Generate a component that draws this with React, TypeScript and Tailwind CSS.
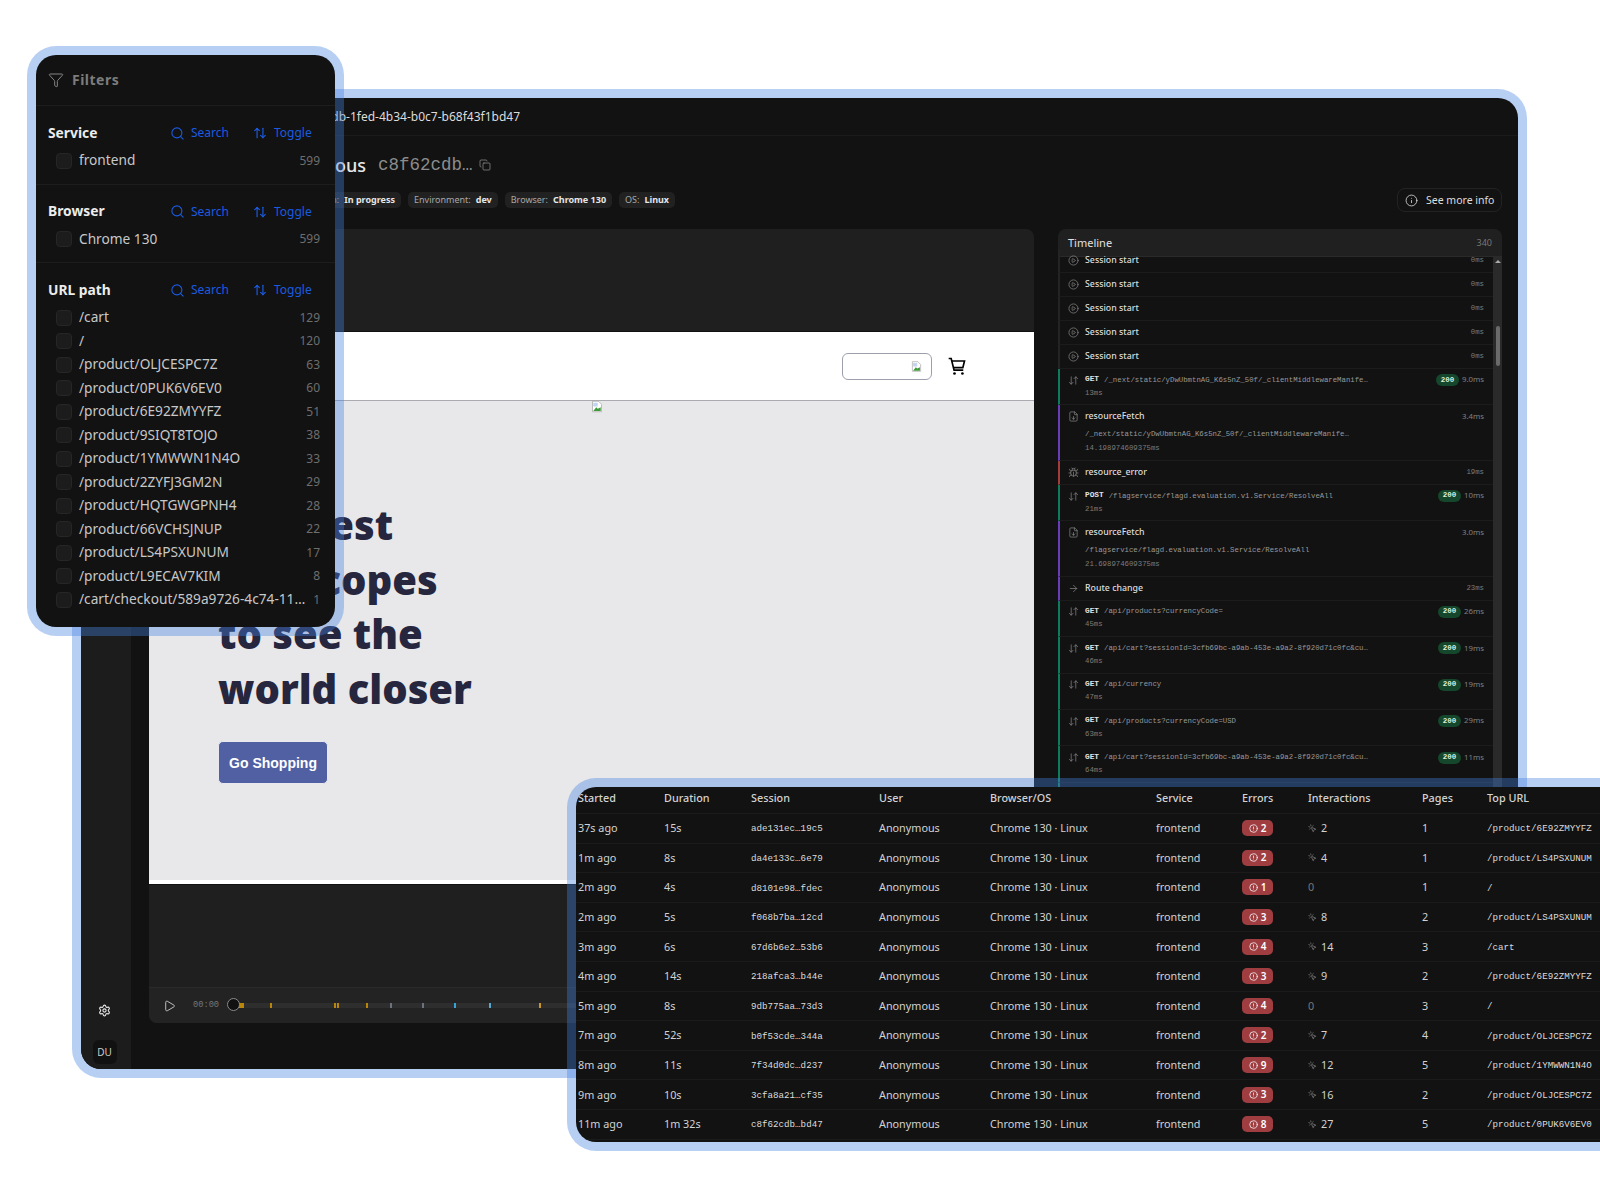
import {
  ArrowDownUp,
  ArrowRight,
  ArrowUpDown,
  Bug,
  CircleAlert,
  CirclePlay,
  Copy,
  FileDown,
  Funnel,
  Info,
  MousePointerClick,
  Play,
  Search,
  Settings,
} from 'lucide-react';

const sans = 'font-["Noto_Sans",sans-serif]';
const mono = 'font-["Liberation_Mono",monospace]';

const urlPaths: [string, number][] = [
  ['/cart', 129],
  ['/', 120],
  ['/product/OLJCESPC7Z', 63],
  ['/product/0PUK6V6EV0', 60],
  ['/product/6E92ZMYYFZ', 51],
  ['/product/9SIQT8TOJO', 38],
  ['/product/1YMWWN1N4O', 33],
  ['/product/2ZYFJ3GM2N', 29],
  ['/product/HQTGWGPNH4', 28],
  ['/product/66VCHSJNUP', 22],
  ['/product/LS4PSXUNUM', 17],
  ['/product/L9ECAV7KIM', 8],
  ['/cart/checkout/589a9726-4c74-11…', 1],
];

const sessions: [string, string, string, number, number, number, string][] = [
  ['37s ago', '15s', 'ade131ec…19c5', 2, 2, 1, '/product/6E92ZMYYFZ'],
  ['1m ago', '8s', 'da4e133c…6e79', 2, 4, 1, '/product/LS4PSXUNUM'],
  ['2m ago', '4s', 'd8101e98…fdec', 1, 0, 1, '/'],
  ['2m ago', '5s', 'f068b7ba…12cd', 3, 8, 2, '/product/LS4PSXUNUM'],
  ['3m ago', '6s', '67d6b6e2…53b6', 4, 14, 3, '/cart'],
  ['4m ago', '14s', '218afca3…b44e', 3, 9, 2, '/product/6E92ZMYYFZ'],
  ['5m ago', '8s', '9db775aa…73d3', 4, 0, 3, '/'],
  ['7m ago', '52s', 'b0f53cde…344a', 2, 7, 4, '/product/OLJCESPC7Z'],
  ['8m ago', '11s', '7f34d0dc…d237', 9, 12, 5, '/product/1YMWWN1N4O'],
  ['9m ago', '10s', '3cfa8a21…cf35', 3, 16, 2, '/product/OLJCESPC7Z'],
  ['11m ago', '1m 32s', 'c8f62cdb…bd47', 8, 27, 5, '/product/0PUK6V6EV0'],
];

const ticks: [number, number, string][] = [
  [1, 5, '#b8860b'],
  [32, 2, '#b8860b'],
  [96, 2, '#b8860b'],
  [99, 2, '#b8860b'],
  [128, 2, '#b8860b'],
  [152, 2, '#6b7280'],
  [184, 2, '#6b7280'],
  [216, 2, '#38a3d8'],
  [251, 2, '#5ba6cf'],
  [301, 2, '#c9962b'],
];

const rowGrid = 'grid grid-cols-[86px_87px_128px_111px_166px_86px_66px_114px_65px_1fr] items-center pl-[2px]';

function FilterRow({ label, count }: { label: string; count: number }) {
  return (
    <div className="flex items-center h-[23.5px] pl-[20px] pr-[15px]">
      <span className="w-4 h-4 shrink-0 rounded-[4px] bg-[#1c1c1c] border border-[#262626]" />
      <span className="ml-[7px] flex-1 min-w-0 whitespace-nowrap text-[13.7px] text-[#c8c8c8]">{label}</span>
      <span className="ml-2 text-xs text-[#6e6e6e]">{count}</span>
    </div>
  );
}

function FilterSection({ title, children, last }: { title: string; children: React.ReactNode; last?: boolean }) {
  return (
    <div className={last ? 'pt-[17px]' : 'pt-[17px] pb-[11px] border-b border-[#1d1d1d]'}>
      <div className="flex items-center h-5 pl-3 mb-[6px]">
        <span className="w-[122px] text-[13.8px] font-bold text-[#ececec]">{title}</span>
        <Search className="w-[15px] h-[15px] text-[#1a5be0]" strokeWidth={1.75} />
        <span className="ml-[6px] w-[62px] text-xs text-[#1a5be0]">Search</span>
        <ArrowUpDown className="w-[14px] h-[14px] text-[#1a5be0]" strokeWidth={2} />
        <span className="ml-[7px] text-xs text-[#1a5be0]">Toggle</span>
      </div>
      {children}
    </div>
  );
}

function FiltersPanel() {
  return (
    <div className={`absolute left-[36px] top-[55px] w-[299px] h-[572px] rounded-[20px] bg-[#121212] shadow-[0_0_0_9px_rgba(69,128,226,0.38)] overflow-hidden ${sans}`}>
      <div className="flex items-center h-[51px] pl-[12px] border-b border-[#1d1d1d]">
        <Funnel className="w-[16px] h-[16px] text-[#858585]" strokeWidth={1.5} />
        <span className="ml-[8px] text-sm font-bold tracking-[0.5px] text-[#7c7c7c]">Filters</span>
      </div>
      <FilterSection title="Service">
        <FilterRow label="frontend" count={599} />
      </FilterSection>
      <FilterSection title="Browser">
        <FilterRow label="Chrome 130" count={599} />
      </FilterSection>
      <FilterSection title="URL path" last>
        {urlPaths.map(([label, count]) => (
          <FilterRow key={label} label={label} count={count} />
        ))}
      </FilterSection>
    </div>
  );
}

function Chip({ label, value }: { label: string; value: string }) {
  return (
    <span className="flex items-center gap-[5px] h-[16px] px-[6px] rounded-[5px] bg-[#212121] text-[9px] whitespace-nowrap">
      <span className="text-[#a8a8a8]">{label}</span>
      <span className="font-bold text-[#e6e6e6]">{value}</span>
    </span>
  );
}

function Status({ time }: { time: string }) {
  return (
    <span className="flex items-center gap-[3px] shrink-0">
      <span className={`flex items-center justify-center w-[23px] h-[12px] rounded-full bg-[#14472b] text-[7.5px] font-bold text-[#d8f0df] ${mono}`}>200</span>
      <span className="text-[7.8px] text-[#808080] whitespace-nowrap">{time}</span>
    </span>
  );
}

function SessionRow() {
  return (
    <div className="flex items-center h-[24px] shrink-0 pl-[8px] pr-[9px] border-l-2 border-l-[#242424] border-b border-b-[#1c1c1c]">
      <CirclePlay className="w-[11px] h-[11px] text-[#8a8a8a] mr-[6px]" strokeWidth={1.5} />
      <span className="flex-1 text-[8.8px] font-medium text-[#dcdcdc]">Session start</span>
      <span className={`text-[7.3px] text-[#7c7c7c] ${mono}`}>0ms</span>
    </div>
  );
}

function NetRow({ method, path, at, time }: { method: string; path: string; at: string; time: string }) {
  return (
    <div className="flex flex-col justify-center h-[36.4px] shrink-0 pl-[8px] pr-[9px] border-l-2 border-l-[#0f7b5c] border-b border-b-[#1c1c1c]">
      <div className="flex items-center h-[13px]">
        <ArrowDownUp className="w-[11px] h-[11px] text-[#8a8a8a] mr-[6px] shrink-0" strokeWidth={1.5} />
        <span className={`mr-[5px] text-[7.8px] font-bold text-[#e2e2e2] ${mono}`}>{method}</span>
        <span className={`flex-1 min-w-0 text-[7.33px] text-[#999] whitespace-nowrap ${mono}`}>{path}</span>
        <Status time={time} />
      </div>
      <div className={`pl-[17px] text-[7.3px] leading-[13px] text-[#7c7c7c] ${mono}`}>{at}</div>
    </div>
  );
}

function ResourceRow({ path, at, time }: { path: string; at: string; time: string }) {
  return (
    <div className="flex flex-col h-[56px] shrink-0 pt-[5px] pl-[8px] pr-[9px] border-l-2 border-l-[#6a3db8] border-b border-b-[#1c1c1c]">
      <div className="flex items-center h-[13px]">
        <FileDown className="w-[11px] h-[11px] text-[#8a8a8a] mr-[6px]" strokeWidth={1.5} />
        <span className="flex-1 text-[8.8px] font-medium text-[#dcdcdc]">resourceFetch</span>
        <span className="text-[7.8px] text-[#808080]">{time}</span>
      </div>
      <div className={`mt-[5px] pl-[17px] text-[7.33px] leading-[13px] text-[#999] whitespace-nowrap ${mono}`}>{path}</div>
      <div className={`pl-[17px] text-[7.33px] leading-[14px] text-[#7c7c7c] ${mono}`}>{at}</div>
    </div>
  );
}

function PlainRow({ icon, label, time, border }: { icon: React.ReactNode; label: string; time: string; border: string }) {
  return (
    <div className={`flex items-center h-[23.5px] shrink-0 pl-[8px] pr-[9px] border-l-2 border-b border-b-[#1c1c1c] ${border}`}>
      {icon}
      <span className="flex-1 text-[8.8px] font-medium text-[#dcdcdc]">{label}</span>
      <span className={`text-[7.3px] text-[#7c7c7c] ${mono}`}>{time}</span>
    </div>
  );
}

function Timeline() {
  return (
    <div className="flex flex-col w-[444px] h-[794px] overflow-hidden">
      <div className="flex items-center justify-between h-[28px] shrink-0 pt-[1px] px-[10px] rounded-t-lg bg-[#202020] border-b border-[#2a2a2a]">
        <span className="text-[11px] text-[#e0e0e0]">Timeline</span>
        <span className="text-[9px] text-[#777]">340</span>
      </div>
      <div className="flex flex-1 min-h-0">
        <div className="flex-1 min-w-0 flex flex-col -mt-[8px] overflow-hidden">
          <SessionRow />
          <SessionRow />
          <SessionRow />
          <SessionRow />
          <SessionRow />
          <NetRow method="GET" path="/_next/static/yDwUbmtnAG_K6s5nZ_50f/_clientMiddlewareManife…" at="13ms" time="9.0ms" />
          <ResourceRow path="/_next/static/yDwUbmtnAG_K6s5nZ_50f/_clientMiddlewareManife…" at="14.198974609375ms" time="3.4ms" />
          <PlainRow
            icon={<Bug className="w-[11px] h-[11px] text-[#8a8a8a] mr-[6px]" strokeWidth={1.5} />}
            label="resource_error"
            time="19ms"
            border="border-l-[#a33c3c]"
          />
          <NetRow method="POST" path="/flagservice/flagd.evaluation.v1.Service/ResolveAll" at="21ms" time="10ms" />
          <ResourceRow path="/flagservice/flagd.evaluation.v1.Service/ResolveAll" at="21.698974609375ms" time="3.0ms" />
          <PlainRow
            icon={<ArrowRight className="w-[11px] h-[11px] text-[#8a8a8a] mr-[6px]" strokeWidth={1.5} />}
            label="Route change"
            time="23ms"
            border="border-l-[#6a3db8]"
          />
          <NetRow method="GET" path="/api/products?currencyCode=" at="45ms" time="26ms" />
          <NetRow method="GET" path="/api/cart?sessionId=3cfb69bc-a9ab-453e-a9a2-8f920d71c0fc&cu…" at="46ms" time="19ms" />
          <NetRow method="GET" path="/api/currency" at="47ms" time="19ms" />
          <NetRow method="GET" path="/api/products?currencyCode=USD" at="63ms" time="29ms" />
          <NetRow method="GET" path="/api/cart?sessionId=3cfb69bc-a9ab-453e-a9a2-8f920d71c0fc&cu…" at="64ms" time="11ms" />
          <div className="flex-1 border-l-2 border-l-[#0f7b5c]" />
        </div>
        <div className="flex flex-col items-center w-[9px] shrink-0 bg-[#2a2a2a]">
          <span className="mt-[3px] w-0 h-0 border-x-[3px] border-x-transparent border-b-[3px] border-b-[#aaa]" />
          <span className="mt-[63px] w-[4px] h-[40px] rounded-full bg-[#6a6a6a]" />
        </div>
      </div>
    </div>
  );
}

function BrokenImage({ className }: { className: string }) {
  return (
    <svg className={className} viewBox="0 0 16 16" fill="none">
      <path d="M2 1h8l4 4v10H2z" fill="#fff" stroke="#a8a8a8" />
      <path d="M3 3h6v5H3z" fill="#c3d4f2" />
      <path d="M3 14l4-5 2 2 4-2v5z" fill="#3f9b3a" />
    </svg>
  );
}

function CartIcon() {
  return (
    <svg className="ml-[15px] -mt-[1px] w-[20px] h-[20px]" viewBox="0 0 24 24" fill="none" stroke="#000" strokeWidth="2">
      <path d="M2 3h3l3.5 14h11" />
      <path d="M6 6h15l-2 8H8" />
      <circle cx="9" cy="21" r="1.6" fill="#000" stroke="none" />
      <circle cx="18.5" cy="21" r="1.6" fill="#000" stroke="none" />
    </svg>
  );
}

function Viewer() {
  return (
    <div className="flex flex-col w-[885px] h-[794px] rounded-lg overflow-hidden bg-[#1f1f1f]">
      <div className="h-[103px] shrink-0 border-b border-[#101010]" />
      <div className="flex items-center justify-end h-[69px] shrink-0 pr-[67px] bg-white border-b border-[#a9abb0]">
        <div className="flex items-center justify-end w-[90px] h-[27px] pr-[9px] rounded-[6px] border border-[#9da0ab]">
          <BrokenImage className="w-[11px] h-[13px]" />
        </div>
        <CartIcon />
      </div>
      <div className="flex flex-col h-[479px] shrink-0 bg-[#e8e8ea]">
        <div className="flex justify-center h-[97px] shrink-0 pl-[11px]">
          <BrokenImage className="w-[12px] h-[13px] -mt-[1px]" />
        </div>
        <h1 className={`pl-[69px] text-[40px] leading-[54.5px] font-extrabold text-[#26263f] font-["Open_Sans",sans-serif]`}>
          The best
          <br />
          telescopes
          <br />
          to see the
          <br />
          world closer
        </h1>
        <button className="ml-[69px] mt-[25px] w-[110px] h-[43px] rounded-[5px] bg-[#515fa3] border border-[#e8e8ee] text-sm font-bold text-white font-['Liberation_Sans',sans-serif]">
          Go Shopping
        </button>
      </div>
      <div className="h-[4px] shrink-0 bg-white" />
      <div className="flex-1 min-h-0 border-t border-[#101010]" />
      <div className="flex items-center h-[36px] shrink-0 pl-[14px] bg-[#232323] border-t border-[#2a2a2a]">
        <Play className="w-[13px] h-[14px] text-[#e2e2e2]" strokeWidth={1.5} />
        <span className={`ml-[17px] text-[8.7px] text-[#777] ${mono}`}>00:00</span>
        <div className="relative ml-[19px] flex-1 h-[5px] bg-[#2e2e2e]">
          {ticks.map(([left, width, color]) => (
            <span
              key={left}
              className="absolute top-0 h-[5px]"
              style={{ left, width, backgroundColor: color }}
            />
          ))}
        </div>
      </div>
    </div>
  );
}

function MainWindow() {
  return (
    <div className={`absolute left-[81px] top-[98px] w-[1437px] h-[971px] flex rounded-[20px] bg-[#121212] shadow-[0_0_0_9px_rgba(69,128,226,0.38)] overflow-hidden ${sans}`}>
      <aside className="flex flex-col items-center justify-end w-[50px] shrink-0 pb-[5px] pr-[3px] bg-[#1c1c1c]">
        <Settings className="w-[13px] h-[13px] text-[#e8e8e8]" strokeWidth={2} />
        <span className="flex items-center justify-center mt-[23px] w-[24px] h-[24px] rounded-[6px] bg-[#111] text-[10px] text-[#ccc]">DU</span>
      </aside>
      <div className="flex-1 min-w-0 flex flex-col">
        <div className="flex items-center h-[38px] shrink-0 pl-[17px] border-b border-[#1b1b1b]">
          <span className="w-[372px] text-right text-xs text-[#dcdcdc] whitespace-nowrap">Sessions / c8f62cdb-1fed-4b34-b0c7-b68f43f1bd47</span>
        </div>
        <div className="flex items-center h-[20px] shrink-0 mt-[19px] pl-[17px]">
          <span className="w-[218px] text-right text-lg font-medium text-[#e8e8e8] whitespace-nowrap">Anonymous</span>
          <span className={`ml-[12px] text-[17.5px] text-[#8c8c8c] ${mono}`}>c8f62cdb…</span>
          <Copy className="ml-[6px] w-[12px] h-[12px] text-[#8c8c8c]" strokeWidth={1.5} />
        </div>
        <div className="flex items-center justify-between h-[24px] shrink-0 mt-[13px] pl-[17px] pr-[16px]">
          <div className="flex items-center gap-[7px]">
            <div className="flex justify-end gap-[7px] w-[253px] overflow-hidden">
              <Chip label="Service:" value="frontend" />
              <Chip label="Session:" value="In progress" />
            </div>
            <Chip label="Environment:" value="dev" />
            <Chip label="Browser:" value="Chrome 130" />
            <Chip label="OS:" value="Linux" />
          </div>
          <span className="flex items-center w-[105px] h-[24px] pl-[7px] pt-[1px] rounded-lg border border-[#232323] text-[10.5px] text-[#dedede]">
            <Info className="w-[13px] h-[13px]" strokeWidth={1.5} />
            <span className="ml-[8px] whitespace-nowrap">See more info</span>
          </span>
        </div>
        <div className="flex gap-[24px] mt-[17px] pl-[18px]">
          <div className="relative">
            <Viewer />
            <span className="absolute left-[78px] top-[769px] w-[13px] h-[13px] rounded-full bg-[#111] border border-[#8a8a8a]" />
          </div>
          <Timeline />
        </div>
      </div>
    </div>
  );
}

function SessionsTable() {
  return (
    <div className={`absolute left-[576px] top-[787px] w-[1060px] h-[355px] rounded-[20px] bg-[#121212] shadow-[0_0_0_9px_rgba(69,128,226,0.38)] overflow-hidden ${sans}`}>
      <div className={`${rowGrid} h-[27px] pb-[3px] text-[10.8px] font-medium text-[#d2d2d2] border-b border-[#1b1b1b]`}>
        {['Started', 'Duration', 'Session', 'User', 'Browser/OS', 'Service', 'Errors', 'Interactions', 'Pages', 'Top URL'].map((h) => (
          <span key={h}>{h}</span>
        ))}
      </div>
      {sessions.map(([started, duration, id, errors, interactions, pages, url]) => (
        <div key={id} className={`${rowGrid} h-[29.6px] text-[10.8px] text-[#d2d2d2] border-b border-[#1b1b1b]`}>
          <span>{started}</span>
          <span>{duration}</span>
          <span className={`pt-[2px] text-[9.2px] text-[#dcdcdc] ${mono}`}>{id}</span>
          <span>Anonymous</span>
          <span>Chrome 130 · Linux</span>
          <span>frontend</span>
          <span className="flex items-center justify-center gap-[3px] w-[31px] h-[16px] rounded-[5px] bg-[#9f3d40] text-[10px] font-semibold text-white">
            <CircleAlert className="w-[9px] h-[9px]" strokeWidth={2} />
            {errors}
          </span>
          {interactions > 0 ? (
            <span className="flex items-center gap-[4px]">
              <MousePointerClick className="w-[9px] h-[9px] text-[#7c7c7c]" strokeWidth={2} />
              {interactions}
            </span>
          ) : (
            <span className="text-[#777]">0</span>
          )}
          <span>{pages}</span>
          <span className={`pt-[2px] text-[9.2px] text-[#dcdcdc] ${mono}`}>{url}</span>
        </div>
      ))}
    </div>
  );
}

export default function App() {
  return (
    <div className="relative w-[1600px] h-[1200px] overflow-hidden bg-white">
      <MainWindow />
      <SessionsTable />
      <FiltersPanel />
    </div>
  );
}
